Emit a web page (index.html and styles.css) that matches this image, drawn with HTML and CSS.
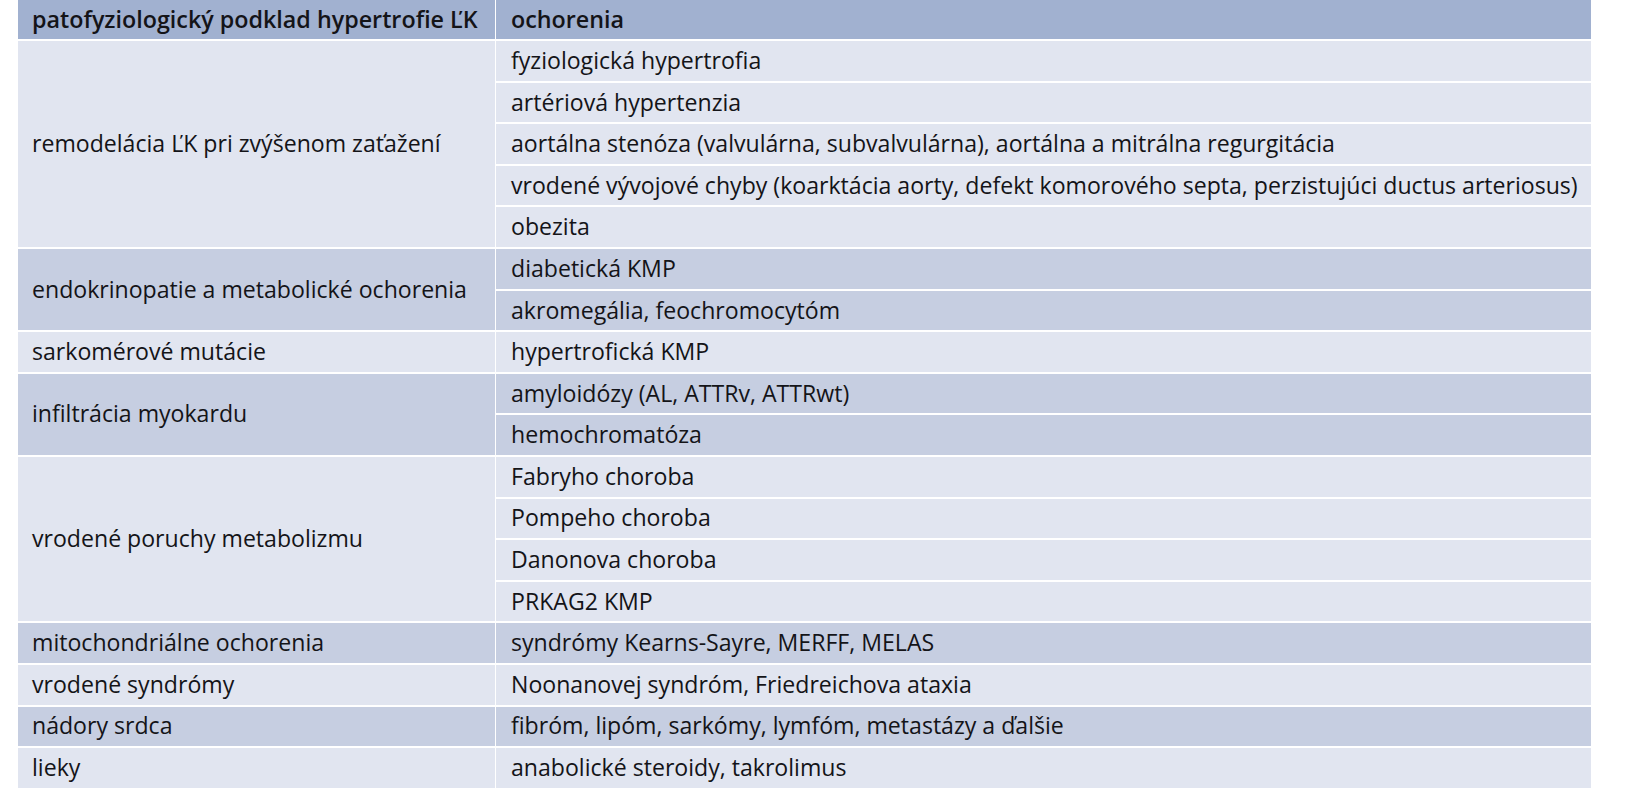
FILE: index.html
```html
<!DOCTYPE html>
<html lang="sk">
<head>
<meta charset="utf-8">
<title>Hypertrofia ĽK</title>
<link rel="stylesheet" href="styles.css">
</head>
<body>
<table class="tbl">
  <thead>
    <tr class="head"><th class="c1">patofyziologický podklad hypertrofie ĽK</th><th class="c2">ochorenia</th></tr>
  </thead>
  <tbody>
    <tr class="light"><td class="c1" rowspan="5">remodelácia ĽK pri zvýšenom zaťažení</td><td class="c2">fyziologická hypertrofia</td></tr>
    <tr class="light"><td class="c2">artériová hypertenzia</td></tr>
    <tr class="light"><td class="c2">aortálna stenóza (valvulárna, subvalvulárna), aortálna a mitrálna regurgitácia</td></tr>
    <tr class="light"><td class="c2">vrodené vývojové chyby (koarktácia aorty, defekt komorového septa, perzistujúci ductus arteriosus)</td></tr>
    <tr class="light"><td class="c2">obezita</td></tr>
    <tr class="dark"><td class="c1" rowspan="2">endokrinopatie a metabolické ochorenia</td><td class="c2">diabetická KMP</td></tr>
    <tr class="dark"><td class="c2">akromegália, feochromocytóm</td></tr>
    <tr class="light"><td class="c1">sarkomérové mutácie</td><td class="c2">hypertrofická KMP</td></tr>
    <tr class="dark"><td class="c1" rowspan="2">infiltrácia myokardu</td><td class="c2">amyloidózy (AL, ATTRv, ATTRwt)</td></tr>
    <tr class="dark"><td class="c2">hemochromatóza</td></tr>
    <tr class="light"><td class="c1" rowspan="4">vrodené poruchy metabolizmu</td><td class="c2">Fabryho choroba</td></tr>
    <tr class="light"><td class="c2">Pompeho choroba</td></tr>
    <tr class="light"><td class="c2">Danonova choroba</td></tr>
    <tr class="light"><td class="c2">PRKAG2 KMP</td></tr>
    <tr class="dark"><td class="c1">mitochondriálne ochorenia</td><td class="c2">syndrómy Kearns-Sayre, MERFF, MELAS</td></tr>
    <tr class="light"><td class="c1">vrodené syndrómy</td><td class="c2">Noonanovej syndróm, Friedreichova ataxia</td></tr>
    <tr class="dark"><td class="c1">nádory srdca</td><td class="c2">fibróm, lipóm, sarkómy, lymfóm, metastázy a ďalšie</td></tr>
    <tr class="light"><td class="c1">lieky</td><td class="c2">anabolické steroidy, takrolimus</td></tr>
  </tbody>
</table>
</body>
</html>
```
FILE: styles.css
```css
html, body {
  margin: 0;
  padding: 0;
  background: #ffffff;
}
body {
  padding-left: 18px;
  font-family: "Open Sans", "Noto Sans", sans-serif;
  font-size: 23.1px;
  color: #141418;
}
.tbl {
  width: 1573px;
  border-collapse: collapse;
  table-layout: fixed;
}
.tbl .c1 {
  width: 463px;
}
.tbl th, .tbl td {
  text-align: left;
  vertical-align: middle;
  padding: 0 0 0 14px;
  height: 39.6px;
  border-bottom: 2px solid #ffffff;
  line-height: 1.2;
  white-space: nowrap;
}
.tbl .c2 {
  border-left: 1.5px solid #ffffff;
  padding-left: 15px;
}
.head th {
  background: #a1b1d0;
  font-weight: 600;
  font-size: 23.3px;
  height: 39px;
}
.light td {
  background: #e1e5f0;
}
.dark td {
  background: #c6cee1;
}
.tbl tbody tr:last-child td {
  border-bottom: 0;
}
```
